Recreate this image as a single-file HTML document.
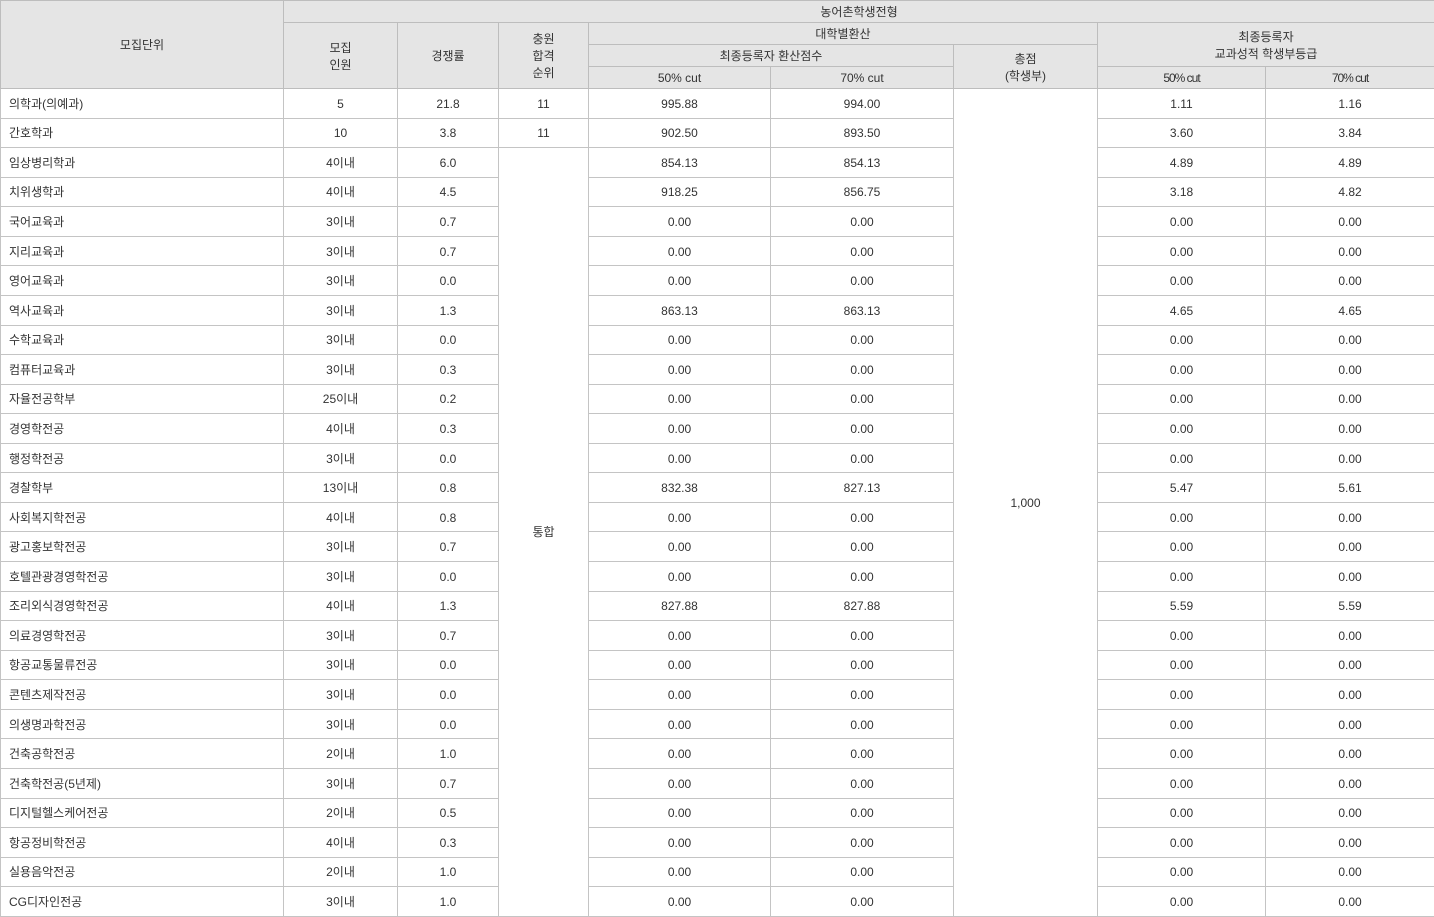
<!DOCTYPE html>
<html><head><meta charset="utf-8"><style>
html,body{margin:0;padding:0;background:#fff;}
table{border-collapse:collapse;table-layout:fixed;width:1434px;font-family:"Liberation Sans","Noto Sans CJK KR",sans-serif;font-size:12px;color:#333;}
td,th{border:1px solid #c4c4c4;padding:2px 0 0 0;text-align:center;font-weight:normal;overflow:hidden;white-space:nowrap;line-height:17px;}
th{background:#e5e5e5;border-color:#bdbdbd;}
thead tr{height:22px;}
tbody tr{height:29.57px;}
td.l{text-align:left;padding-left:8px;}
</style></head><body>
<table>
<colgroup><col style="width:283px"><col style="width:114px"><col style="width:101px"><col style="width:90px"><col style="width:182px"><col style="width:183px"><col style="width:144px"><col style="width:168px"><col style="width:169px"></colgroup>
<thead>
<tr><th rowspan="4">모집단위</th><th colspan="8">농어촌학생전형</th></tr>
<tr><th rowspan="3">모집<br>인원</th><th rowspan="3">경쟁률</th><th rowspan="3">충원<br>합격<br>순위</th><th colspan="3">대학별환산</th><th colspan="2" rowspan="2">최종등록자<br>교과성적 학생부등급</th></tr>
<tr><th colspan="2">최종등록자 환산점수</th><th rowspan="2">총점<br>(학생부)</th></tr>
<tr><th>50% cut</th><th>70% cut</th><th style="letter-spacing:-1px">50% cut</th><th style="letter-spacing:-1px">70% cut</th></tr>
</thead>
<tbody>
<tr><td class="l">의학과(의예과)</td><td>5</td><td>21.8</td><td>11</td><td>995.88</td><td>994.00</td><td rowspan="28">1,000</td><td>1.11</td><td>1.16</td></tr>
<tr><td class="l">간호학과</td><td>10</td><td>3.8</td><td>11</td><td>902.50</td><td>893.50</td><td>3.60</td><td>3.84</td></tr>
<tr><td class="l">임상병리학과</td><td>4이내</td><td>6.0</td><td rowspan="26">통합</td><td>854.13</td><td>854.13</td><td>4.89</td><td>4.89</td></tr>
<tr><td class="l">치위생학과</td><td>4이내</td><td>4.5</td><td>918.25</td><td>856.75</td><td>3.18</td><td>4.82</td></tr>
<tr><td class="l">국어교육과</td><td>3이내</td><td>0.7</td><td>0.00</td><td>0.00</td><td>0.00</td><td>0.00</td></tr>
<tr><td class="l">지리교육과</td><td>3이내</td><td>0.7</td><td>0.00</td><td>0.00</td><td>0.00</td><td>0.00</td></tr>
<tr><td class="l">영어교육과</td><td>3이내</td><td>0.0</td><td>0.00</td><td>0.00</td><td>0.00</td><td>0.00</td></tr>
<tr><td class="l">역사교육과</td><td>3이내</td><td>1.3</td><td>863.13</td><td>863.13</td><td>4.65</td><td>4.65</td></tr>
<tr><td class="l">수학교육과</td><td>3이내</td><td>0.0</td><td>0.00</td><td>0.00</td><td>0.00</td><td>0.00</td></tr>
<tr><td class="l">컴퓨터교육과</td><td>3이내</td><td>0.3</td><td>0.00</td><td>0.00</td><td>0.00</td><td>0.00</td></tr>
<tr><td class="l">자율전공학부</td><td>25이내</td><td>0.2</td><td>0.00</td><td>0.00</td><td>0.00</td><td>0.00</td></tr>
<tr><td class="l">경영학전공</td><td>4이내</td><td>0.3</td><td>0.00</td><td>0.00</td><td>0.00</td><td>0.00</td></tr>
<tr><td class="l">행정학전공</td><td>3이내</td><td>0.0</td><td>0.00</td><td>0.00</td><td>0.00</td><td>0.00</td></tr>
<tr><td class="l">경찰학부</td><td>13이내</td><td>0.8</td><td>832.38</td><td>827.13</td><td>5.47</td><td>5.61</td></tr>
<tr><td class="l">사회복지학전공</td><td>4이내</td><td>0.8</td><td>0.00</td><td>0.00</td><td>0.00</td><td>0.00</td></tr>
<tr><td class="l">광고홍보학전공</td><td>3이내</td><td>0.7</td><td>0.00</td><td>0.00</td><td>0.00</td><td>0.00</td></tr>
<tr><td class="l">호텔관광경영학전공</td><td>3이내</td><td>0.0</td><td>0.00</td><td>0.00</td><td>0.00</td><td>0.00</td></tr>
<tr><td class="l">조리외식경영학전공</td><td>4이내</td><td>1.3</td><td>827.88</td><td>827.88</td><td>5.59</td><td>5.59</td></tr>
<tr><td class="l">의료경영학전공</td><td>3이내</td><td>0.7</td><td>0.00</td><td>0.00</td><td>0.00</td><td>0.00</td></tr>
<tr><td class="l">항공교통물류전공</td><td>3이내</td><td>0.0</td><td>0.00</td><td>0.00</td><td>0.00</td><td>0.00</td></tr>
<tr><td class="l">콘텐츠제작전공</td><td>3이내</td><td>0.0</td><td>0.00</td><td>0.00</td><td>0.00</td><td>0.00</td></tr>
<tr><td class="l">의생명과학전공</td><td>3이내</td><td>0.0</td><td>0.00</td><td>0.00</td><td>0.00</td><td>0.00</td></tr>
<tr><td class="l">건축공학전공</td><td>2이내</td><td>1.0</td><td>0.00</td><td>0.00</td><td>0.00</td><td>0.00</td></tr>
<tr><td class="l">건축학전공(5년제)</td><td>3이내</td><td>0.7</td><td>0.00</td><td>0.00</td><td>0.00</td><td>0.00</td></tr>
<tr><td class="l">디지털헬스케어전공</td><td>2이내</td><td>0.5</td><td>0.00</td><td>0.00</td><td>0.00</td><td>0.00</td></tr>
<tr><td class="l">항공정비학전공</td><td>4이내</td><td>0.3</td><td>0.00</td><td>0.00</td><td>0.00</td><td>0.00</td></tr>
<tr><td class="l">실용음악전공</td><td>2이내</td><td>1.0</td><td>0.00</td><td>0.00</td><td>0.00</td><td>0.00</td></tr>
<tr><td class="l">CG디자인전공</td><td>3이내</td><td>1.0</td><td>0.00</td><td>0.00</td><td>0.00</td><td>0.00</td></tr>
</tbody></table>
</body></html>
